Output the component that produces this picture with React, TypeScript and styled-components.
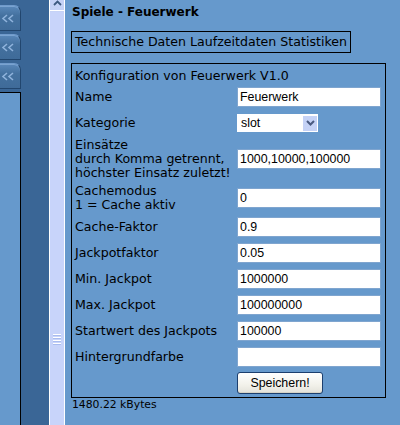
import styled, { createGlobalStyle } from "styled-components";

const GlobalStyle = createGlobalStyle`
  html, body {
    margin: 0;
    padding: 0;
    background: #6699cc;
  }
  body {
    font-family: "DejaVu Sans", Verdana, sans-serif;
    color: #000;
  }
`;

const rows = [
  { label: ["Name"], value: "Feuerwerk" },
  { label: ["Kategorie"], select: "slot" },
  {
    label: ["Einsätze", "durch Komma getrennt,", "höchster Einsatz zuletzt!"],
    value: "1000,10000,100000",
  },
  { label: ["Cachemodus", "1 = Cache aktiv"], value: "0" },
  { label: ["Cache-Faktor"], value: "0.9" },
  { label: ["Jackpotfaktor"], value: "0.05" },
  { label: ["Min. Jackpot"], value: "1000000" },
  { label: ["Max. Jackpot"], value: "100000000" },
  { label: ["Startwert des Jackpots"], value: "100000" },
  { label: ["Hintergrundfarbe"], value: "" },
];

export default function App() {
  return (
    <>
      <GlobalStyle />
      <Page>
        <Sidebar>
          <TabColumn>
            {[0, 1, 2].map((i) => (
              <Tab key={i}>
                <svg width="14" height="9" viewBox="0 0 14 9">
                  <path
                    d="M6 1 L2 4.5 L6 8 M12 1 L8 4.5 L12 8"
                    stroke="#8fb3dc"
                    strokeWidth="1.6"
                    fill="none"
                  />
                </svg>
              </Tab>
            ))}
            <TabPanel />
          </TabColumn>
        </Sidebar>
        <Scrollbar>
          <ScrollUp>
            <svg width="9" height="6" viewBox="0 0 9 6">
              <path d="M1 5 L4.5 1.5 L8 5" stroke="#3d5a80" strokeWidth="1.8" fill="none" />
            </svg>
          </ScrollUp>
          <ScrollThumb>
            <Grip>
              <span />
              <span />
              <span />
              <span />
            </Grip>
          </ScrollThumb>
        </Scrollbar>
        <Main>
          <Heading>Spiele - Feuerwerk</Heading>
          <TabNav>
            <NavLink>Technische Daten</NavLink> <NavLink>Laufzeitdaten</NavLink>{" "}
            <NavLink>Statistiken</NavLink>
          </TabNav>
          <FormBox>
            <FormTitle>Konfiguration von Feuerwerk V1.0</FormTitle>
            <FormGrid>
              {rows.map((row) => (
                <Row key={row.label[0]}>
                  <Label>
                    {row.label.map((line) => (
                      <div key={line}>{line}</div>
                    ))}
                  </Label>
                  {row.select ? (
                    <Select>
                      <span>{row.select}</span>
                      <SelectArrow>
                        <svg width="9" height="6" viewBox="0 0 9 6">
                          <path d="M1 1 L4.5 4.5 L8 1" stroke="#4a5a80" strokeWidth="2" fill="none" />
                        </svg>
                      </SelectArrow>
                    </Select>
                  ) : (
                    <Input defaultValue={row.value} />
                  )}
                </Row>
              ))}
              <Row>
                <Label />
                <Button>Speichern!</Button>
              </Row>
            </FormGrid>
          </FormBox>
          <Footer>1480.22 kBytes</Footer>
        </Main>
      </Page>
    </>
  );
}

const Page = styled.div`
  display: flex;
  height: 425px;
  overflow: hidden;
`;

const Sidebar = styled.div`
  width: 49px;
  background: #3a6696;
  flex-shrink: 0;
`;

const TabColumn = styled.div`
  width: 21px;
  height: 100%;
  display: flex;
  flex-direction: column;
  padding-top: 5px;
  box-sizing: border-box;
`;

const Tab = styled.div`
  height: 24px;
  margin-bottom: 3px;
  background: linear-gradient(#5a88ba, #44719f 40%, #3f6b99);
  border: 1px solid #22466e;
  border-left: none;
  border-top-color: #6f9acb;
  border-radius: 0 7px 0 0;
  box-shadow: inset 0 1px 0 #7aa3d0;
  display: flex;
  align-items: center;
  justify-content: flex-start;
  padding-left: 1px;
`;

const TabPanel = styled.div`
  flex: 1;
  background: #6699cc;
  border-top: 1px solid #000;
  border-right: 1px solid #000;
`;

const Scrollbar = styled.div`
  width: 16px;
  flex-shrink: 0;
  display: flex;
  flex-direction: column;
  background: #c5d2f6;
  border-left: 1px solid #ffffff;
  border-right: 1px solid #ffffff;
  box-sizing: border-box;
`;

const ScrollUp = styled.div`
  height: 10px;
  border-bottom: 1px solid #ffffff;
  background: #c5d2f6;
  display: flex;
  justify-content: center;
  align-items: flex-start;
`;

const ScrollThumb = styled.div`
  flex: 1;
  margin-top: 1px;
  background: #c8d4fa;
  display: flex;
  align-items: flex-start;
  justify-content: center;
  padding-top: 322px;
`;

const Grip = styled.div`
  display: flex;
  flex-direction: column;
  gap: 1px;

  span {
    width: 8px;
    height: 1px;
    background: #ffffff;
    border-bottom: 1px solid #a9bcef;
  }
`;

const Main = styled.div`
  flex: 1;
  padding: 6px 0 0 6px;
  background: #6699cc;
`;

const Heading = styled.div`
  font-weight: bold;
  font-size: 12px;
  line-height: 13px;
  padding-left: 1px;
`;

const TabNav = styled.div`
  display: inline-block;
  margin-top: 12px;
  border: 1px solid #000;
  padding: 0 3px;
  height: 20px;
  line-height: 20px;
  font-size: 12.6px;
  white-space: nowrap;
`;

const NavLink = styled.span`
  color: #000;
  cursor: pointer;
`;

const FormBox = styled.div`
  width: 315px;
  box-sizing: border-box;
  margin-top: 10px;
  border: 1px solid #000;
  padding: 4px 3px 3px 3px;
  font-size: 12.6px;
`;

const FormTitle = styled.div`
  line-height: 15px;
  margin-bottom: 3px;
`;

const FormGrid = styled.div`
  display: flex;
  flex-direction: column;
  gap: 4px;
`;

const Row = styled.div`
  display: grid;
  grid-template-columns: 162px 144px;
  align-items: center;
  min-height: 22px;
`;

const Label = styled.div`
  line-height: 14px;
  white-space: nowrap;
`;

const Input = styled.input`
  width: 144px;
  height: 20px;
  box-sizing: border-box;
  border: 1px solid #7fa5cf;
  background: #fff;
  padding: 0 2px;
  font-family: "Liberation Sans", Arial, sans-serif;
  font-size: 12.4px;
  color: #000;
  outline: none;
`;

const Select = styled.div`
  width: 81px;
  height: 18px;
  box-sizing: border-box;
  background: #fff;
  display: flex;
  align-items: center;
  justify-content: space-between;
  font-family: "Liberation Sans", Arial, sans-serif;
  font-size: 12.4px;
  padding-left: 4px;
`;

const SelectArrow = styled.div`
  width: 16px;
  height: 17px;
  box-sizing: border-box;
  background: #c5d2f6;
  border: 1px solid #ffffff;
  display: flex;
  align-items: center;
  justify-content: center;
`;

const Button = styled.button`
  width: 86px;
  height: 22px;
  padding: 0;
  border: 1px solid #1c3f6e;
  border-radius: 3px;
  background: linear-gradient(#ffffff, #f2f1ea 60%, #e3e2da);
  font-family: "Liberation Sans", Arial, sans-serif;
  font-size: 12.4px;
  color: #000;
  box-shadow: inset 0 -1px 0 #d6d3c6;
`;

const Footer = styled.div`
  font-size: 10.8px;
  line-height: 14px;
  padding-left: 1px;
`;
